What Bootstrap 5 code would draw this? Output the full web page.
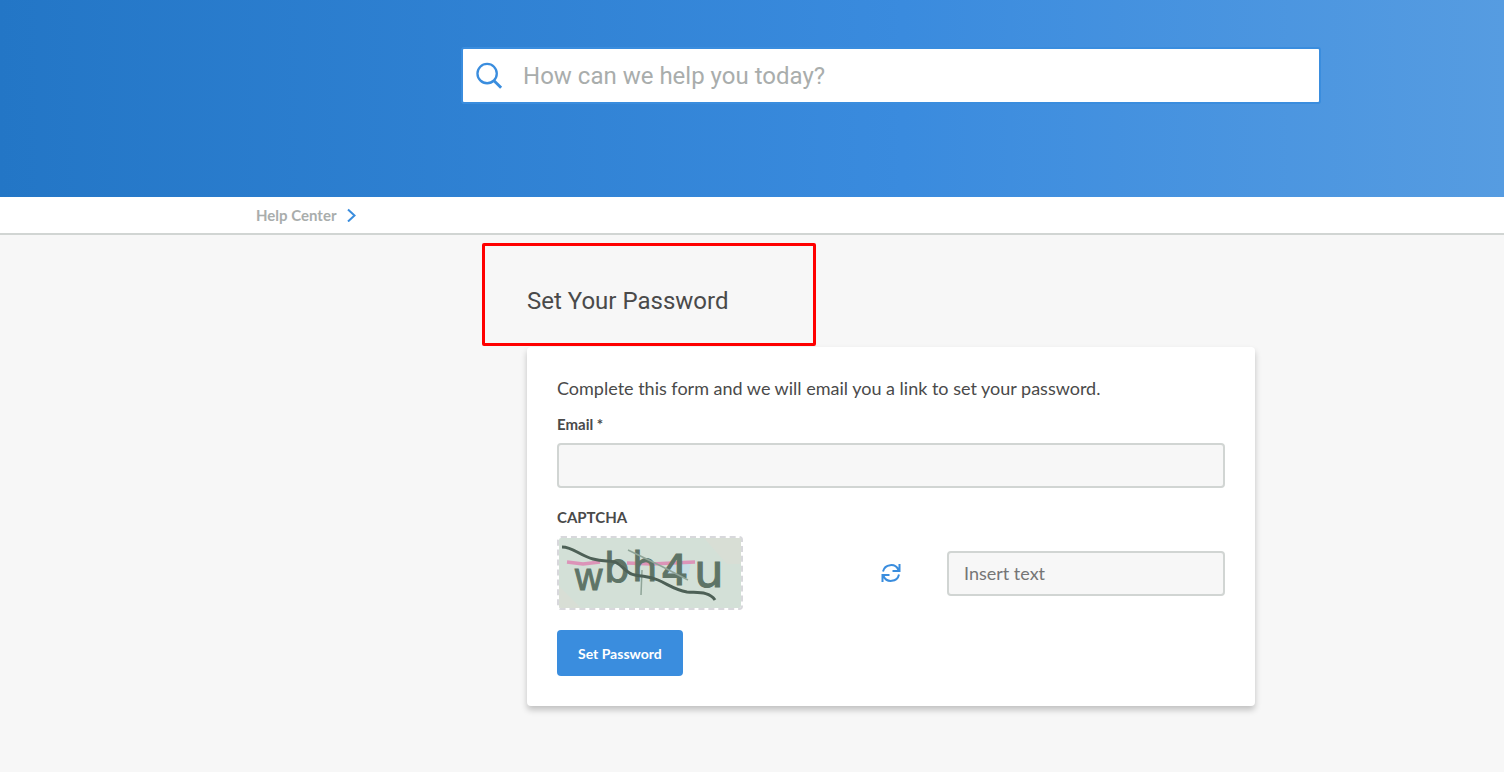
<!DOCTYPE html>
<html lang="en">
<head>
<meta charset="utf-8">
<meta name="viewport" content="width=device-width, initial-scale=1">
<title>Set Your Password</title>
<link href="https://cdn.jsdelivr.net/npm/bootstrap@5.3.0/dist/css/bootstrap.min.css" rel="stylesheet">
<style>
  :root { --brand: #3a8dde; --line: #d1d5d3; --ink: #4a4a4a; --muted: #a9adac; --page: #f7f7f7; }
  body { background: var(--page); color: var(--ink); font-family: Lato, sans-serif; font-size: 18px; line-height: 24px; }
  .hero { background: linear-gradient(90deg, #2376c6 0%, #3a8bde 60%, #569ce1 100%); padding: 47px 0 93px; }
  .offset-area { padding-left: 278px; }
  .search-box { max-width: 860px; border: 2px solid var(--brand); border-radius: 3px; padding-left: 13px; }
  .search-box input { height: 53px; padding: 0 20px; font-family: Roboto, sans-serif; font-size: 24px; color: var(--ink); }
  .search-box input::placeholder { color: var(--muted); opacity: 1; }
  .crumbs { padding: 6px 0 6px 256px; border-bottom: 2px solid var(--line); font-size: 15px; font-weight: 700; }
  .crumbs a { color: var(--muted); }
  .panel-wrap { max-width: 728px; }
  .title-mark { width: 334px; margin: 8px 0 1px -45px; padding: 40px 42px 27px; border: 3px solid #f00; border-radius: 2px; }
  .title-mark h1 { font-family: Roboto, sans-serif; font-size: 24px; line-height: 30px; font-weight: 400; }
  .panel { border-radius: 4px; padding: 29px 30px 30px; box-shadow: 0 4px 6px rgba(0,0,0,.22); }
  .intro { margin-bottom: 11px; }
  .form-label { font-size: 15px; font-weight: 700; line-height: 20px; margin-bottom: 9px; }
  .field { height: 45px; border: 2px solid var(--line); border-radius: 4px; background: var(--page); font-size: 18px; padding: 0 15px; }
  .field::placeholder { color: #757575; }
  .captcha-row { margin-bottom: 20px; }
  .captcha-side { width: 278px; }
  .captcha { border: 2px dashed #d8d8dc; border-radius: 4px; background: #d3e0d7 padding-box; }
  .btn-brand { background: var(--brand); color: #fff; font-size: 14px; font-weight: 700; height: 46px; padding: 0 21px; border: 0; border-radius: 4px; }
</style>
</head>
<body>
<header class="hero">
  <div class="offset-area">
    <form class="search-box bg-white d-flex align-items-center mx-auto" role="search">
      <svg width="28" height="28" viewBox="0 0 28 28" fill="none" stroke="#3a8dde" stroke-width="2.4" aria-hidden="true"><circle cx="11.500" cy="11.500" r="10"/><path d="M18.400 18.600 26 26.200" stroke-width="3"/></svg>
      <input type="search" class="form-control border-0 bg-transparent shadow-none" placeholder="How can we help you today?" aria-label="Search">
    </form>
  </div>
</header>
<nav class="crumbs bg-white d-flex align-items-center" aria-label="Breadcrumb">
  <a href="#" class="text-decoration-none">Help Center</a>
  <svg class="ms-2" width="14" height="14" viewBox="0 0 14 14" fill="none" stroke="#3a8dde" stroke-width="2" aria-hidden="true"><path d="M4 1.500 10.500 7.500 4 13.500"/></svg>
</nav>
<main class="offset-area">
  <div class="panel-wrap mx-auto">
    <div class="title-mark"><h1 class="m-0">Set Your Password</h1></div>
    <form class="panel bg-white mb-5">
      <p class="intro">Complete this form and we will email you a link to set your password.</p>
      <div class="mb-3">
        <label class="form-label" for="email">Email *</label>
        <input type="email" class="form-control field" id="email">
      </div>
      <label class="form-label" for="captcha">CAPTCHA</label>
      <div class="captcha-row d-flex align-items-center">
        <div class="captcha-side d-flex">
          <div class="captcha">
            <svg class="d-block" width="182" height="70" viewBox="0 0 182 70" role="img" aria-label="Captcha">
              <path d="M145 0h37v26h-14ZM0 48 22 70H0Z" fill="#d9ddd5" opacity=".8"/>
              <path d="M110 25h22l-3 13h-22Z" fill="#c6dde4"/>
              <path d="M8 24 24 26 41 24M68 25 92 26 136 24" fill="none" stroke="#dc94b8" stroke-width="3.500"/>
              <g font-family="DejaVu Sans, sans-serif" fill="#5e7467" stroke="#5e7467" stroke-width="1">
                <text x="16" y="52" font-size="38" font-family="Liberation Sans, sans-serif">w</text>
                <text x="45" y="44" font-size="40">b</text>
                <text x="73" y="43" font-size="40">h</text>
                <text x="102" y="47" font-size="43">4</text>
                <text x="135" y="49" font-size="47">u</text>
              </g>
              <path d="M69 12 102 28 129 42M83 32 82 57" fill="none" stroke="#8fa498" stroke-width="1.500"/>
              <path d="M3 9C14 9 20 17 34 21C44 24 50 22 56 24C65 28 67 36 76 37C87 39 90 38 99 42C110 47 116 52 128 54C138 55 150 53 156 62" fill="none" stroke="#4d6056" stroke-width="3"/>
            </svg>
          </div>
        </div>
        <button type="button" class="btn p-0 border-0 mx-auto" aria-label="Refresh captcha">
          <svg class="d-block" width="20" height="20" viewBox="0 0 20 20" fill="none" stroke="#3a8dde" stroke-width="2" aria-hidden="true"><path d="M2 8.500A8.200 8.200 0 0 1 17.500 7M18.500 1v7h-7M18 11.500A8.200 8.200 0 0 1 2.500 13M1.500 19v-7h7"/></svg>
        </button>
        <div class="captcha-side"><input type="text" class="form-control field" id="captcha" placeholder="Insert text"></div>
      </div>
      <button type="submit" class="btn btn-brand">Set Password</button>
    </form>
  </div>
</main>
<script src="https://cdn.jsdelivr.net/npm/bootstrap@5.3.0/dist/js/bootstrap.bundle.min.js"></script>
</body>
</html>
